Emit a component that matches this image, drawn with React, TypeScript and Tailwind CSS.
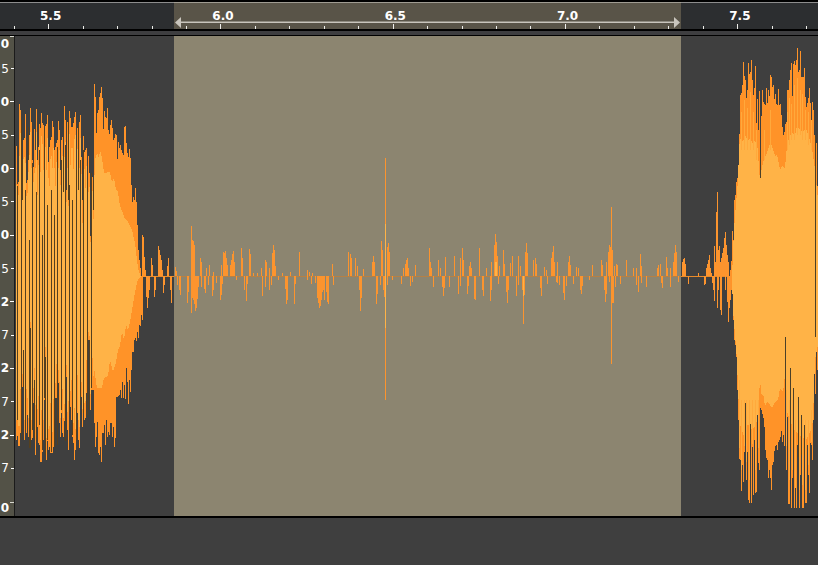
const seconds = ["5.5", "6.0", "6.5", "7.0", "7.5"];

// Only the last digit of each level fits in the narrow ruler
const levels = [
  { id: "u5", digit: "5", major: false },
  { id: "u10", digit: "0", major: true },
  { id: "u15", digit: "5", major: false },
  { id: "u20", digit: "0", major: true },
  { id: "u25", digit: "5", major: false },
  { id: "u30", digit: "0", major: true },
  { id: "u35", digit: "5", major: false },
  { id: "d32", digit: "2", major: true },
  { id: "d27", digit: "7", major: false },
  { id: "d22", digit: "2", major: true },
  { id: "d17", digit: "7", major: false },
  { id: "d12", digit: "2", major: true },
  { id: "d7", digit: "7", major: false },
];

const AXIS = 276;

// Peaks of the first loud part, one value per column from x = 16
const introStart = 16;
const introTop = [
  146, 184, 182, 104, 110, 160, 163, 140, 138, 114, 183, 180, 127, 135, 108, 122, 160, 167, 129, 150,
  109, 160, 147, 124, 128, 113, 123, 125, 148, 126, 124, 115, 162, 147, 140, 137, 121, 127, 150, 147,
  143, 140, 121, 130, 170, 140, 137, 155, 106, 120, 190, 122, 195, 111, 118, 127, 127, 123, 117, 112,
  185, 128, 124, 122, 115, 157, 200, 136, 152, 150, 148, 180, 156, 173, 236, 200, 177, 210, 84, 97,
  133, 113, 110, 97, 93, 87, 98, 129, 111, 117, 118, 108, 130, 134, 125, 120, 128, 140, 138, 134,
  135, 159, 142, 148, 145, 150, 153, 155, 127, 126, 143, 153, 157, 149, 158, 185, 202, 197, 200, 188,
  202, 225, 250, 260, 268, 276, 235, 237, 257, 270,
];
const introBottom = [
  440, 436, 446, 446, 433, 423, 387, 387, 440, 430, 433, 415, 437, 448, 328, 440, 438, 403, 380, 455,
  433, 427, 443, 445, 462, 462, 452, 440, 400, 357, 460, 441, 450, 447, 453, 453, 453, 447, 447, 398,
  398, 445, 383, 423, 437, 413, 433, 437, 421, 441, 377, 430, 450, 412, 407, 420, 437, 443, 460, 450,
  440, 413, 440, 448, 405, 397, 427, 413, 420, 418, 393, 410, 340, 360, 410, 390, 390, 390, 423, 447,
  437, 422, 453, 455, 447, 462, 433, 433, 425, 445, 420, 437, 432, 435, 423, 423, 437, 427, 447, 438,
  397, 397, 396, 395, 390, 398, 382, 398, 385, 399, 368, 382, 404, 380, 392, 370, 352, 352, 340, 338,
  341, 332, 338, 325, 326, 315, 320, 277, 277, 277,
];

// Peaks of the last loud part, one value per column from x = 731
const outroStart = 731;
const outroTop = [
  261, 231, 240, 200, 195, 182, 178, 166, 134, 95, 93, 85, 62, 76, 80, 98, 90, 63, 74, 72, 60, 80, 95,
  88, 66, 123, 99, 130, 91, 177, 116, 90, 102, 104, 105, 88, 103, 90, 96, 75, 77, 87, 85, 99, 94, 104,
  105, 89, 105, 104, 115, 127, 135, 132, 124, 122, 90, 90, 80, 70, 63, 96, 64, 61, 65, 60, 48, 72, 70,
  51, 77, 77, 77, 68, 97, 107, 103, 98, 88, 103, 130, 102, 110, 135, 138, 143, 186,
];
const outroBottom = [
  290, 292, 320, 340, 345, 357, 390, 420, 459, 460, 491, 465, 482, 452, 403, 480, 452, 500, 503, 424,
  503, 447, 495, 440, 493, 492, 413, 463, 470, 408, 410, 414, 418, 427, 450, 458, 460, 478, 470, 478,
  490, 465, 462, 451, 446, 445, 450, 442, 440, 437, 431, 442, 435, 446, 337, 470, 417, 504, 504, 368,
  508, 478, 388, 508, 443, 508, 445, 397, 508, 475, 415, 508, 508, 425, 503, 503, 445, 475, 493, 443,
  445, 460, 420, 357, 394, 345, 370,
];

// Single spikes in the quiet part, as x:y pairs
const spikesUp =
  "151:258 152:265 158:246 159:250 160:255 161:260 162:270 167:266 168:258 175:267 176:271 191:226 192:240 193:241 194:245 200:258 201:262 206:268 209:265 213:272 221:265 223:252 224:253 225:251 226:258 227:265 230:265 231:260 232:254 233:251 234:262 241:248 242:258 249:249 250:254 253:273 257:273 261:268 265:260 266:262 269:268 272:253 273:245 274:250 275:266 282:273 290:272 299:252 307:270 309:272 312:273 332:264 348:252 350:254 351:258 355:258 357:266 363:269 372:262 373:256 374:262 381:241 382:250 385:158 387:247 388:243 389:252 403:268 405:264 406:260 407:258 408:268 415:265 429:248 430:262 431:268 438:260 440:268 445:257 454:256 460:258 462:248 463:260 469:266 470:262 471:268 479:248 486:268 491:262 494:245 495:234 496:242 497:256 499:266 503:250 504:264 510:263 512:256 518:256 520:266 525:252 526:243 527:253 533:260 535:258 536:264 544:267 546:270 551:258 552:252 553:246 554:262 557:262 568:262 569:256 570:265 576:267 578:268 592:265 601:260 602:265 606:262 608:252 609:245 610:247 611:207 612:250 614:266 616:264 617:265 626:260 633:268 636:268 640:254 641:266 657:268 658:265 660:264 666:257 667:268 670:268 673:262 674:253 675:245 676:252 682:262 683:259 684:258 685:264 698:273 706:268 707:264 708:260 709:255 710:268 711:273 714:246 715:262 716:212 717:192 718:250 719:246 720:262 721:258 722:253 723:248 724:238 725:232 726:245 727:255 728:262 730:270";
const spikesDown =
  "146:297 147:308 148:298 149:290 154:297 155:290 163:293 164:285 170:290 171:303 177:285 179:290 180:295 187:303 188:292 191:313 192:298 193:300 194:304 195:311 196:308 197:299 198:287 201:287 204:289 205:293 208:285 212:296 213:290 216:283 220:300 221:295 222:284 236:280 244:290 246:301 247:284 262:296 265:287 269:290 271:285 278:280 285:289 286:304 287:300 294:304 295:284 307:280 311:284 315:283 317:298 318:303 319:308 320:306 321:300 322:292 323:290 324:300 326:292 327:302 328:304 333:285 359:290 360:311 361:298 376:304 377:294 380:285 383:290 384:297 385:400 387:285 392:280 401:284 410:286 412:282 433:287 442:287 443:296 444:288 449:287 458:294 460:286 467:294 468:286 474:299 475:300 482:290 483:296 490:301 491:290 498:284 506:292 507:303 508:290 516:296 518:285 522:290 523:324 524:295 540:288 541:296 547:284 556:282 557:283 559:285 563:293 564:300 566:286 573:284 580:290 581:294 582:286 589:280 604:290 605:302 606:294 609:282 611:364 612:303 613:303 615:287 620:284 636:285 638:292 641:283 646:287 661:283 662:288 670:287 678:282 688:284 704:285 705:284 712:283 713:290 714:301 717:308 718:290 720:310 721:315 725:290 727:302 728:322 729:308 730:300";

// Dark gaps between the cycles of the first part: x, start, end
const gaps = [
  [17, 186, 420], [21, 120, 440], [25, 190, 430], [29, 240, 448], [32, 163, 430], [36, 192, 440],
  [39, 150, 425], [42, 235, 450], [44, 130, 398], [47, 205, 440], [51, 190, 452], [54, 215, 447],
  [57, 147, 445], [61, 160, 410], [65, 145, 441], [69, 185, 412], [72, 200, 435], [76, 170, 440],
  [80, 160, 405], [83, 150, 413], [87, 180, 415], [91, 173, 388], [22, 160, 200], [23, 350, 387],
  [28, 127, 160], [30, 328, 448], [34, 380, 438], [45, 357, 455], [63, 155, 192], [68, 122, 200],
  [78, 124, 190], [93, 180, 210], [89, 340, 410],
];

const introRms =
  "M94 190 95 160 97 153 99 158 100 150 102 158 104 173 110 172 112 182 114 178 116 190 118 192 120 206 123 213 125 219 128 222 132 230 135 243 138 268 141 277 138 279 135 292 132 310 130 322 128 330 126 325 124 340 122 332 120 346 118 350 116 362 113 372 110 360 108 376 104 378 102 388 97 388 94 368Z";
const outroRms =
  "M732 277 734 230 736 204 738 180 739 150 740 138 743 142 745 135 748 141 750 138 753 144 755 140 758 150 759 172 760 178 762 168 763 162 766 155 768 150 770 144 772 146 775 156 777 154 780 170 782 166 785 168 787 145 789 138 792 132 795 136 797 126 800 130 803 132 806 128 808 134 812 148 815 170 818 200 818 345 815 360 813 418 812 428 806 440 800 436 794 430 790 420 787 412 785 375 783 392 780 388 778 400 775 402 772 408 770 405 767 402 765 406 763 392 762 398 760 380 758 412 756 425 752 430 748 424 744 436 740 425 738 390 737 360 733 310Z";

// Columns where the bright part reaches further than its neighbours
const streaks = [
  [741, 112, 150], [744, 100, 150], [747, 108, 150], [750, 92, 150], [753, 112, 150], [756, 130, 160],
  [764, 130, 160], [770, 110, 150], [787, 112, 150], [789, 98, 145], [791, 104, 140], [794, 85, 140],
  [797, 78, 135], [800, 90, 135], [802, 94, 140], [805, 110, 140], [808, 112, 145], [811, 120, 150],
  [739, 380, 448], [741, 400, 470], [744, 400, 446], [746, 400, 462], [749, 400, 480], [752, 400, 444],
  [755, 400, 470], [758, 400, 448], [786, 390, 446], [789, 400, 480], [792, 400, 470], [795, 420, 488],
  [799, 420, 490], [802, 420, 485], [805, 420, 490], [808, 420, 465], [811, 410, 442],
];

function bars(start: number, top: number[], bottom: number[]) {
  return top.map((y, i) => `M${start + i} ${y}h1V${bottom[i]}h-1z`).join("");
}

function spikes(list: string) {
  return list
    .split(" ")
    .map((pair) => {
      const [x, y] = pair.split(":");
      return `M${x} ${AXIS}V${y}h1V${AXIS}z`;
    })
    .join("");
}

// The inner, brighter part of the striped cycles
const stripeEnd = 94 - introStart;
const stripesTop = introTop
  .slice(0, stripeEnd)
  .map((y, i) => Math.round(y + (AXIS - y) * (i % 3 === 0 ? 0.3 : 0.14)));
const stripesBottom = introBottom
  .slice(0, stripeEnd)
  .map((y, i) => Math.round(y - (y - AXIS) * (i % 3 === 1 ? 0.28 : 0.12)));

function TimeRuler() {
  const ticks = Array.from({ length: 24 }, (_, i) => ({
    x: Math.round(13.7 + i * 34.45),
    major: i % 5 === 1,
  }));

  return (
    <header className="relative h-[31px] border-b-2 border-black bg-[#2c2e30]">
      <div className="flex h-full border-t-2 border-black">
        <div className="flex-[174] border-t border-[#8d8d8d]" />
        <div className="flex-[507] border-t border-[#a09c92] bg-[#595448]" />
        <div className="flex-[137] border-t border-[#8d8d8d]" />
      </div>
      <svg
        className="absolute inset-0 h-[29px] w-full"
        viewBox="0 0 818 29"
        preserveAspectRatio="none"
        shapeRendering="crispEdges"
        aria-hidden="true"
      >
        {ticks.map((tick) => (
          <rect
            key={tick.x}
            x={tick.x}
            y={tick.major ? 24 : 26}
            width="1"
            height={tick.major ? 5 : 3}
            fill="#eeeeea"
          />
        ))}
        <rect x="178" y="22" width="500" height="1" fill="#c9c5bd" />
        <rect x="178" y="21" width="500" height="1" fill="#8f8b80" />
        <path d="M175 22.5 181 17V28ZM680 22.5 674 17V28Z" fill="#c9c5bd" shapeRendering="auto" />
      </svg>
      <div className="absolute inset-x-0 top-2 flex overflow-hidden pl-10 text-xs leading-4 font-bold text-white">
        {seconds.map((s) => (
          <span key={s} className="w-[22.15%] shrink-0">
            {s}
          </span>
        ))}
      </div>
    </header>
  );
}

function LevelRuler() {
  return (
    <div className="flex w-[15px] shrink-0 flex-col border-r border-[#1b1b1b] bg-[#535247] text-xs leading-4 text-white">
      <div className="flex h-4 justify-end gap-px">
        <span className="font-bold">0</span>
        <i className="h-px w-1 shrink-0 bg-[#d8d8d0]" />
      </div>
      {levels.map((level) => (
        <div key={level.id} className="flex flex-1 items-center justify-end gap-px">
          <span className={level.major ? "font-bold" : ""}>{level.digit}</span>
          <i
            className={
              level.major ? "h-px w-1 shrink-0 bg-white" : "ml-px h-px w-[3px] shrink-0 bg-white"
            }
          />
        </div>
      ))}
      <div className="flex h-[31px] items-end justify-end gap-px">
        <span className="font-bold">0</span>
        <i className="mb-[13px] h-px w-1 shrink-0 bg-[#d8d8d0]" />
      </div>
    </div>
  );
}

function Waveform() {
  return (
    <svg
      className="block h-[480px] min-w-0 flex-1"
      viewBox="15 36 803 480"
      preserveAspectRatio="none"
      shapeRendering="crispEdges"
      role="img"
      aria-label="Waveform"
    >
      <rect x="15" y="36" width="803" height="480" fill="#3f3f3f" />
      <rect x="174" y="36" width="507" height="480" fill="#8c8570" />
      <rect x="140" y={AXIS} width="34" height="1" fill="#e88a2a" />
      <rect x="174" y={AXIS} width="507" height="1" fill="#b58045" />
      <rect x="681" y={AXIS} width="52" height="1" fill="#e88a2a" />
      <path d={spikes(spikesUp) + spikes(spikesDown)} fill="#fc942e" />
      <path d={bars(introStart, introTop, introBottom)} fill="#ff9328" />
      <path d={bars(outroStart, outroTop, outroBottom)} fill="#ff9328" />
      <path d={bars(introStart, stripesTop, stripesBottom)} fill="#ffb347" />
      <path d={introRms + outroRms} fill="#ffb347" />
      {streaks.map(([x, from, to]) => (
        <rect key={`${x}-${from}`} x={x} y={from} width="1" height={to - from} fill="#ffa93c" />
      ))}
      <path d="M385 224h1v104h-1zM495 262h2v14h-2zM523 276h1v20h-1z" fill="#ffb347" />
      {gaps.map(([x, from, to]) => (
        <rect key={`${x}-${from}`} x={x} y={from} width="1" height={to - from} fill="#55401f" />
      ))}
      <path d="M785 337h1v60h-1zM790 368h1v80h-1zM760 150h1v28h-1zM815 136h1v141h-1z" fill="#4b4028" />
      <path d="M793 388h1v60h-1zM798 397h1v60h-1zM745 403h1v40h-1zM750 424h1v20h-1zM801 415h1v40h-1zM804 425h1v30h-1zM815 277h1v60h-1z" fill="#4b4028" />
    </svg>
  );
}

export default function App() {
  return (
    <main className="min-h-screen bg-[#3f3f3f] font-['DejaVu_Sans',sans-serif]">
      <TimeRuler />
      <div className="h-1 bg-[#3e3e40]" />
      <section className="flex border-t border-b-2 border-black">
        <LevelRuler />
        <Waveform />
      </section>
    </main>
  );
}
